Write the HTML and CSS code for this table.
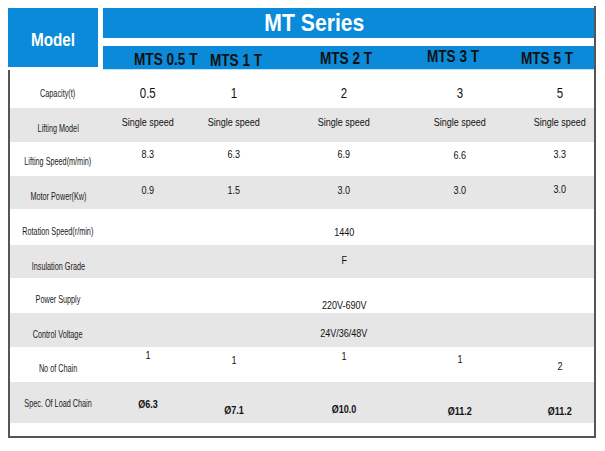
FILE: index.html
```html
<!DOCTYPE html>
<html>
<head>
<meta charset="utf-8">
<link rel="stylesheet" href="styles.css">
</head>
<body>
<div class="sheet">
  <div class="head">
    <div class="model"><span class="sq85">Model</span></div>
    <div class="series">
      <div class="title"><span class="sq92">MT Series</span></div>
      <div class="sub">
        <span class="m m1">MTS 0.5 T</span>
        <span class="m m2">MTS 1 T</span>
        <span class="m m3">MTS 2 T</span>
        <span class="m m4">MTS 3 T</span>
        <span class="m m5">MTS 5 T</span>
      </div>
    </div>
  </div>
  <div class="body">
    <div class="row r1 big">
      <div class="c lab"><span>Capacity(t)</span></div>
      <div class="c"><span>0.5</span></div>
      <div class="c"><span>1</span></div>
      <div class="c"><span>2</span></div>
      <div class="c"><span>3</span></div>
      <div class="c last"><span>5</span></div>
    </div>
    <div class="row r2 gray">
      <div class="c lab dn3"><span>Lifting Model</span></div>
      <div class="c up3"><span>Single speed</span></div>
      <div class="c up3"><span>Single speed</span></div>
      <div class="c up3"><span>Single speed</span></div>
      <div class="c up3"><span>Single speed</span></div>
      <div class="c last up3"><span>Single speed</span></div>
    </div>
    <div class="row r3">
      <div class="c lab dn2"><span>Lifting Speed(m/min)</span></div>
      <div class="c up5"><span>8.3</span></div>
      <div class="c up5"><span>6.3</span></div>
      <div class="c up5"><span>6.9</span></div>
      <div class="c up4"><span>6.6</span></div>
      <div class="c last up5"><span>3.3</span></div>
    </div>
    <div class="row r4 gray">
      <div class="c lab dn3"><span>Motor Power(Kw)</span></div>
      <div class="c up3"><span>0.9</span></div>
      <div class="c up3"><span>1.5</span></div>
      <div class="c up3"><span>3.0</span></div>
      <div class="c up3"><span>3.0</span></div>
      <div class="c last up4"><span>3.0</span></div>
    </div>
    <div class="row r5">
      <div class="c lab dn4"><span>Rotation Speed(r/min)</span></div>
      <div class="c"></div>
      <div class="c"></div>
      <div class="c dn5"><span>1440</span></div>
      <div class="c"></div>
      <div class="c last"></div>
    </div>
    <div class="row r6 gray">
      <div class="c lab dn4"><span>Insulation Grade</span></div>
      <div class="c"></div>
      <div class="c"></div>
      <div class="c up2"><span>F</span></div>
      <div class="c"></div>
      <div class="c last"></div>
    </div>
    <div class="row r7">
      <div class="c lab dn3"><span>Power Supply</span></div>
      <div class="c"></div>
      <div class="c"></div>
      <div class="c dn9"><span>220V-690V</span></div>
      <div class="c"></div>
      <div class="c last"></div>
    </div>
    <div class="row r8 gray">
      <div class="c lab dn4"><span>Control Voltage</span></div>
      <div class="c"></div>
      <div class="c"></div>
      <div class="c dn3"><span>24V/36/48V</span></div>
      <div class="c"></div>
      <div class="c last"></div>
    </div>
    <div class="row r9">
      <div class="c lab dn3"><span>No of Chain</span></div>
      <div class="c up10"><span>1</span></div>
      <div class="c up5"><span>1</span></div>
      <div class="c up9"><span>1</span></div>
      <div class="c up6"><span>1</span></div>
      <div class="c last dn1"><span>2</span></div>
    </div>
    <div class="row r10 gray strong">
      <div class="c lab"><span>Spec. Of Load Chain</span></div>
      <div class="c dn1"><span>Ø6.3</span></div>
      <div class="c dn7"><span>Ø7.1</span></div>
      <div class="c dn6"><span>Ø10.0</span></div>
      <div class="c dn8"><span>Ø11.2</span></div>
      <div class="c last dn8"><span>Ø11.2</span></div>
    </div>
    <div class="row r11"></div>
  </div>
</div>
</body>
</html>
```
FILE: styles.css
```css
* { box-sizing: border-box; }
html, body { margin: 0; padding: 0; background: #fff; }
body { font-family: "Liberation Sans", Arial, sans-serif; color: #111; }

.sheet {
  margin: 6px 0 0 8px;
  width: 588px;
  padding-top: 2px;
  border-right: 2px solid #555;
}

.head {
  display: grid;
  grid-template-columns: 90px 1fr;
  column-gap: 5px;
  align-items: start;
}
.model {
  background: #0a8ad8;
  height: 59px;
  color: #fff;
  font-weight: bold;
  font-size: 18px;
  display: flex;
  align-items: center;
  justify-content: center;
  padding-top: 6px;
}
.sq85 { display: inline-block; transform: scaleX(.85); }
.sq92 { display: inline-block; transform: scaleX(.92); }

.series { display: flex; flex-direction: column; }
.title {
  background: #0a8ad8;
  height: 30px;
  color: #fff;
  font-weight: bold;
  font-size: 23px;
  display: flex;
  align-items: center;
  justify-content: center;
  padding-right: 68px;
  padding-top: 1px;
}
.sub {
  margin-top: 8px;
  background: #0a8ad8;
  height: 24px;
  border-bottom: 1px solid #bfe2f6;
  display: flex;
  align-items: center;
  font-weight: bold;
  font-size: 17px;
  color: #111;
}
.m {
  display: inline-block;
  width: 70px;
  text-align: center;
  transform: scaleX(.8);
  white-space: nowrap;
  flex: none;
}
.m1 { margin-left: 24px; padding-top: 4px; }
.m2 { margin-left: 4px; padding-top: 7px; }
.m3 { margin-left: 40px; padding-top: 3px; }
.m4 { margin-left: 37px; padding-bottom: 1px; }
.m5 { margin-left: 24px; padding-top: 3px; }

.body {
  border-left: 2px solid #555;
  border-bottom: 2px solid #555;
}
.row {
  display: grid;
  grid-template-columns: 96px 84px 88px 132px 100px 84px;
  font-size: 11px;
}
.gray { background: #e6e6e6; }
.r1 { height: 38px; padding-top: 8px; }
.r2 { height: 34px; }
.r3 { height: 34px; }
.r4 { height: 33px; }
.r5 { height: 36px; }
.r6 { height: 33px; }
.r7 { height: 35px; }
.r8 { height: 34px; }
.r9 { height: 35px; }
.r10 { height: 41px; }
.r11 { height: 13px; }

.c {
  display: flex;
  align-items: center;
  justify-content: center;
  white-space: nowrap;
}
.c span { display: inline-block; transform: scaleX(.82); }
.c.lab span { transform: scaleX(.66); color: #1a1a1a; }
.c.last { padding-left: 16px; }
.big .c span { font-size: 14px; }
.big .c.lab span { font-size: 11px; }
.strong .c span { font-weight: bold; }
.strong .c.lab span { font-weight: normal; }

.dn1 { padding-top: 2px; }
.dn2 { padding-top: 4px; }
.dn3 { padding-top: 6px; }
.dn4 { padding-top: 8px; }
.dn5 { padding-top: 10px; }
.dn6 { padding-top: 12px; }
.dn7 { padding-top: 14px; }
.dn8 { padding-top: 16px; }
.dn9 { padding-top: 18px; }
.up2 { padding-bottom: 4px; }
.up3 { padding-bottom: 6px; }
.up4 { padding-bottom: 8px; }
.up5 { padding-bottom: 10px; }
.up6 { padding-bottom: 12px; }
.up9 { padding-bottom: 18px; }
.up10 { padding-bottom: 20px; }
```
